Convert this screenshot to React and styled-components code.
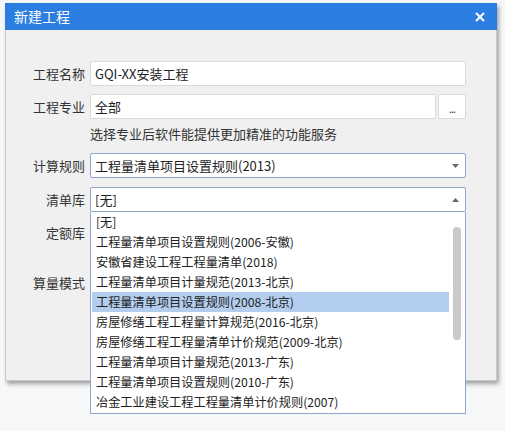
import React from "react";
import styled, { createGlobalStyle } from "styled-components";

const Global = createGlobalStyle`
  html, body { margin: 0; padding: 0; }
  body {
    background: #f6f7f9;
    font-family: "Noto Sans CJK SC", "Noto Sans", sans-serif;
    font-size: 13px;
    color: #222;
  }
`;

const Page = styled.div`
  width: 505px;
  height: 431px;
  padding: 3px 0 0 5px;
  box-sizing: border-box;
`;

const Dialog = styled.div`
  width: 492px;
  background: #f0f0f0;
  border: 1px solid #c9c9c9;
  border-top: none;
  box-sizing: border-box;
  box-shadow: 2px 3px 4px rgba(0, 0, 0, 0.35);
`;

const TitleBar = styled.div`
  height: 27px;
  margin: 0 -1px;
  background: #2b7de0;
  display: flex;
  align-items: center;
  justify-content: space-between;
  padding: 0 10px 0 9px;
  color: #fff;
`;

const Title = styled.span`
  font-size: 14px;
  line-height: 27px;
`;

const CloseBtn = styled.span`
  display: flex;
  align-items: center;
  justify-content: center;
  width: 14px;
  height: 14px;
`;

const Body = styled.div`
  padding: 31px 30px 0 0;
  height: 350px;
  box-sizing: border-box;
  display: flex;
  flex-direction: column;
`;

const Row = styled.div`
  display: grid;
  grid-template-columns: 79px 1fr;
  column-gap: 5px;
  align-items: center;
  min-height: ${(p) => p.$h || 25}px;
  margin-bottom: ${(p) => (p.$mb !== undefined ? p.$mb : 8)}px;
  position: relative;
`;

const Label = styled.label`
  text-align: right;
  color: #333;
  font-size: 13px;
  line-height: 18px;
`;

const Field = styled.div`
  height: 25px;
  background: #fff;
  border: 1px solid ${(p) => (p.$select ? "#8ea5cc" : "#dadada")};
  border-radius: 2px;
  box-sizing: border-box;
  display: flex;
  align-items: center;
  padding: 0 6px 0 4px;
  font-size: 13px;
  line-height: 18px;
  color: #222;
`;

const FieldText = styled.span`
  flex: 1;
  white-space: nowrap;
  overflow: hidden;
`;

const Pair = styled.div`
  display: flex;
  gap: 2px;
`;

const Grow = styled.div`
  flex: 1;
`;

const MoreBtn = styled.div`
  width: 28px;
  height: 25px;
  background: #fff;
  border: 1px solid #dadada;
  border-radius: 2px;
  box-sizing: border-box;
  display: flex;
  align-items: center;
  justify-content: center;
  font-size: 11px;
  color: #444;
  letter-spacing: -1px;
  padding-top: 3px;
`;

const Hint = styled.div`
  color: #333;
  font-size: 13px;
  line-height: 18px;
  grid-column: 2;
`;

const Caret = ({ up }) => (
  <svg width="7" height="4" viewBox="0 0 7 4">
    <polygon points={up ? "0,4 7,4 3.5,0" : "0,0 7,0 3.5,4"} fill="#666" />
  </svg>
);

const Menu = styled.div`
  position: absolute;
  top: 25px;
  left: 84px;
  right: 0;
  background: #fff;
  border: 1px solid #8ea5cc;
  border-top: none;
  box-sizing: border-box;
  z-index: 2;
  padding: 0 16px 1px 1px;
`;

const Item = styled.div`
  height: 20px;
  line-height: 20px;
  padding-left: 4px;
  font-size: 12.2px;
  color: #222;
  white-space: nowrap;
  background: ${(p) => (p.$active ? "#b2cdee" : "transparent")};
`;

const Thumb = styled.div`
  position: absolute;
  right: 4px;
  top: 15px;
  width: 8px;
  height: 113px;
  border-radius: 4px;
  background: #c9c9c9;
`;

const items = [
  "[无]",
  "工程量清单项目设置规则(2006-安徽)",
  "安徽省建设工程工程量清单(2018)",
  "工程量清单项目计量规范(2013-北京)",
  "工程量清单项目设置规则(2008-北京)",
  "房屋修缮工程工程量计算规范(2016-北京)",
  "房屋修缮工程工程量清单计价规范(2009-北京)",
  "工程量清单项目计量规范(2013-广东)",
  "工程量清单项目设置规则(2010-广东)",
  "冶金工业建设工程工程量清单计价规则(2007)",
];

export default function App() {
  return (
    <>
      <Global />
      <Page>
        <Dialog>
          <TitleBar>
            <Title>新建工程</Title>
            <CloseBtn>
              <svg width="10" height="10" viewBox="0 0 10 10">
                <path d="M1 1 L9 9 M9 1 L1 9" stroke="#fff" strokeWidth="2" />
              </svg>
            </CloseBtn>
          </TitleBar>
          <Body>
            <Row>
              <Label>工程名称</Label>
              <Field>
                <FieldText>GQI-XX安装工程</FieldText>
              </Field>
            </Row>
            <Row $mb={4}>
              <Label>工程专业</Label>
              <Pair>
                <Grow>
                  <Field>
                    <FieldText>全部</FieldText>
                  </Field>
                </Grow>
                <MoreBtn>...</MoreBtn>
              </Pair>
            </Row>
            <Row $h={22} $mb={8}>
              <Hint>选择专业后软件能提供更加精准的功能服务</Hint>
            </Row>
            <Row $mb={9}>
              <Label>计算规则</Label>
              <Field $select>
                <FieldText>工程量清单项目设置规则(2013)</FieldText>
                <Caret />
              </Field>
            </Row>
            <Row $mb={8}>
              <Label>清单库</Label>
              <Field $select>
                <FieldText>[无]</FieldText>
                <Caret up />
              </Field>
              <Menu>
                {items.map((t, i) => (
                  <Item key={t} $active={i === 4}>
                    {t}
                  </Item>
                ))}
                <Thumb />
              </Menu>
            </Row>
            <Row $mb={9}>
              <Label>定额库</Label>
              <Field $select>
                <FieldText />
              </Field>
            </Row>
            <Row $h={58} $mb={0}>
              <Label>算量模式</Label>
              <div />
            </Row>
          </Body>
        </Dialog>
      </Page>
    </>
  );
}
